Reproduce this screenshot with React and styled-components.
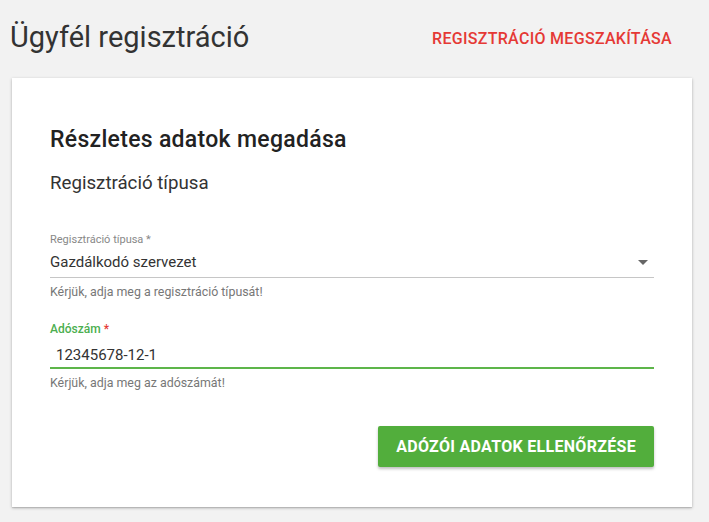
import React from "react";
import styled, { createGlobalStyle } from "styled-components";

const GlobalStyle = createGlobalStyle`
  html, body {
    margin: 0;
    padding: 0;
    background: #f2f2f2;
    font-family: Roboto, "Liberation Sans", sans-serif;
  }
`;

const Page = styled.div`
  width: 709px;
  min-height: 522px;
  background: #f2f2f2;
`;

const Header = styled.header`
  display: flex;
  justify-content: space-between;
  align-items: center;
  height: 74px;
  padding: 0 37px 0 10px;
`;

const Title = styled.h1`
  margin: 0;
  font-size: 29px;
  line-height: 34px;
  font-weight: 400;
  color: #333;
`;

const CancelLink = styled.a`
  margin-top: 2px;
  font-size: 16px;
  line-height: 19px;
  font-weight: 500;
  letter-spacing: 0.3px;
  color: #e53935;
  text-transform: uppercase;
  cursor: pointer;
`;

const Card = styled.section`
  display: flex;
  flex-direction: column;
  margin: 4px 17px 0 12px;
  padding: 48px 38px 40px 38px;
  background: #fff;
  box-shadow: 0 1px 3px rgba(0, 0, 0, 0.25), 0 1px 1px rgba(0, 0, 0, 0.1);
`;

const CardTitle = styled.h2`
  margin: 0;
  font-size: 23px;
  line-height: 28px;
  font-weight: 500;
  letter-spacing: 0.3px;
  color: #222;
`;

const SectionTitle = styled.h3`
  margin: 18px 0 0;
  font-size: 18.7px;
  line-height: 22px;
  font-weight: 400;
  color: #333;
`;

const Field = styled.div`
  display: flex;
  flex-direction: column;
  margin-top: ${p => p.$top}px;
`;

const Label = styled.label`
  font-size: ${p => (p.$active ? 12 : 11)}px;
  line-height: 14px;
  color: ${p => (p.$active ? "#4caf50" : "#888")};
  font-weight: ${p => (p.$active ? 500 : 400)};
`;

const Required = styled.span`
  color: ${p => (p.$active ? "#e53935" : "inherit")};
`;

const Control = styled.div`
  display: flex;
  align-items: center;
  justify-content: space-between;
  height: ${p => p.$h}px;
  padding-top: ${p => p.$pt || 0}px;
  padding-left: ${p => p.$indent || 0}px;
  border-bottom: ${p => (p.$active ? "2px solid #5db54a" : "1px solid #c6c6c6")};
  font-size: 15px;
  color: #333;
`;

const Arrow = styled.span`
  width: 0;
  height: 0;
  margin-right: 6px;
  border-left: 5px solid transparent;
  border-right: 5px solid transparent;
  border-top: 5px solid #666;
`;

const Helper = styled.div`
  margin-top: 6px;
  font-size: 12.4px;
  line-height: 15px;
  color: #777;
`;

const Actions = styled.div`
  display: flex;
  justify-content: flex-end;
  margin-top: 36px;
`;

const Button = styled.button`
  height: 41px;
  padding: 0 18px;
  background: #52ae3c;
  color: #fff;
  border: none;
  border-radius: 2px;
  font-family: Roboto, "Liberation Sans", sans-serif;
  font-size: 16px;
  font-weight: 700;
  letter-spacing: 0.3px;
  text-transform: uppercase;
  box-shadow: 0 2px 3px rgba(0, 0, 0, 0.25);
  cursor: pointer;
`;

export default function App() {
  return (
    <Page>
      <GlobalStyle />
      <Header>
        <Title>Ügyfél regisztráció</Title>
        <CancelLink>Regisztráció megszakítása</CancelLink>
      </Header>
      <Card>
        <CardTitle>Részletes adatok megadása</CardTitle>
        <SectionTitle>Regisztráció típusa</SectionTitle>
        <Field $top={39}>
          <Label>Regisztráció típusa <Required>*</Required></Label>
          <Control $h={30}>
            <span>Gazdálkodó szervezet</span>
            <Arrow />
          </Control>
          <Helper>Kérjük, adja meg a regisztráció típusát!</Helper>
        </Field>
        <Field $top={23}>
          <Label $active>Adószám <Required $active>*</Required></Label>
          <Control $active $h={25} $pt={6} $indent={6}>
            <span>12345678-12-1</span>
          </Control>
          <Helper>Kérjük, adja meg az adószámát!</Helper>
        </Field>
        <Actions>
          <Button>Adózói adatok ellenőrzése</Button>
        </Actions>
      </Card>
    </Page>
  );
}
